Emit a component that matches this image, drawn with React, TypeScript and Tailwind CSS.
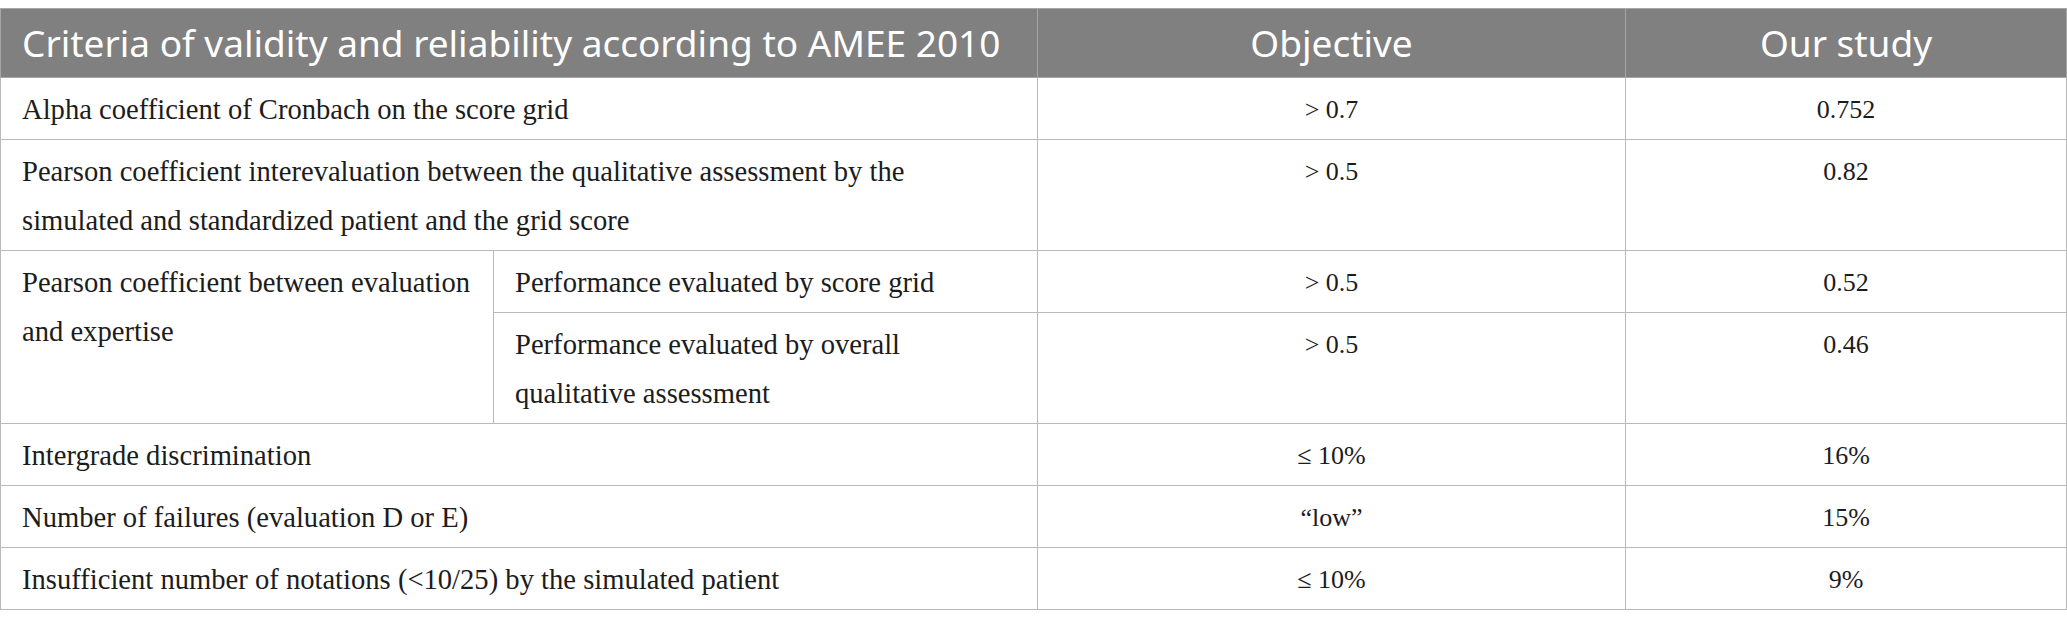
import React from 'react';

type Row = { label: string; objective: string; study: string };

const topRows: Row[] = [
  { label: 'Alpha coefficient of Cronbach on the score grid', objective: '> 0.7', study: '0.752' },
  {
    label: 'Pearson coefficient interevaluation between the qualitative assessment by the simulated and standardized patient and the grid score',
    objective: '> 0.5',
    study: '0.82',
  },
];

const bottomRows: Row[] = [
  { label: 'Intergrade discrimination', objective: '≤ 10%', study: '16%' },
  { label: 'Number of failures (evaluation D or E)', objective: '\u201Clow\u201D', study: '15%' },
  { label: 'Insufficient number of notations (<10/25) by the simulated patient', objective: '≤ 10%', study: '9%' },
];

const cell = 'border border-[#b9b9b9] align-top pt-[7px] pb-[5px] leading-[49px]';
const textCell = `${cell} pl-[21px] pr-[21px] text-left text-[28.6px]`;
const numCell = `${cell} text-center text-[26px]`;

export default function App() {
  return (
    <div className="min-h-screen bg-white pt-2 text-[#1c1c1c]" style={{ fontFamily: '"Liberation Serif", serif' }}>
      <table className="w-full table-fixed border-collapse">
        <colgroup>
          <col className="w-[493px]" />
          <col className="w-[544px]" />
          <col className="w-[588px]" />
          <col />
        </colgroup>
        <thead>
          <tr className="h-[69px] bg-[#808080] text-[37px] text-white" style={{ fontFamily: '"Noto Sans", sans-serif' }}>
            <th colSpan={2} className="border border-[#a6a6a6] px-[21px] text-left font-normal">
              Criteria of validity and reliability according to AMEE 2010
            </th>
            <th className="border border-[#a6a6a6] text-center font-normal">Objective</th>
            <th className="border border-[#a6a6a6] text-center font-normal">Our study</th>
          </tr>
        </thead>
        <tbody>
          {topRows.map((r) => (
            <tr key={r.label}>
              <td colSpan={2} className={textCell}>{r.label}</td>
              <td className={numCell}>{r.objective}</td>
              <td className={numCell}>{r.study}</td>
            </tr>
          ))}
          <tr>
            <td rowSpan={2} className={`${cell} pl-[21px] pr-[4px] text-left text-[28.6px]`}>
              Pearson coefficient between evaluation and expertise
            </td>
            <td className={textCell}>Performance evaluated by score grid</td>
            <td className={numCell}>&gt; 0.5</td>
            <td className={numCell}>0.52</td>
          </tr>
          <tr>
            <td className={textCell}>Performance evaluated by overall qualitative assessment</td>
            <td className={numCell}>&gt; 0.5</td>
            <td className={numCell}>0.46</td>
          </tr>
          {bottomRows.map((r) => (
            <tr key={r.label}>
              <td colSpan={2} className={textCell}>{r.label}</td>
              <td className={numCell}>{r.objective}</td>
              <td className={numCell}>{r.study}</td>
            </tr>
          ))}
        </tbody>
      </table>
    </div>
  );
}
